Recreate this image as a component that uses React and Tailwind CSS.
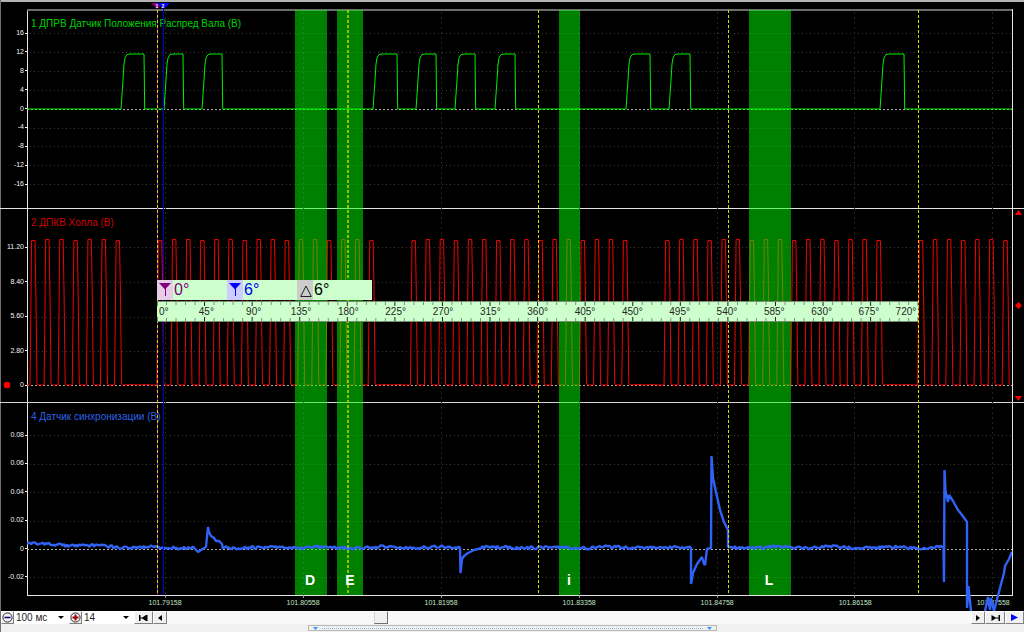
import React from 'react';

// Plot coordinates: x 27..1012, y 9..611
const PLOT_LEFT = 27;
const PLOT_RIGHT = 1012;

const channels = [
  {
    id: 1,
    title: '1 ДПРВ Датчик Положения Распред Вала (В)',
    ticks: ['16', '12', '8', '4', '0', '-4', '-8', '-12', '-16'],
    gridY: [33, 52, 71, 90, 128, 146, 165, 184],
    zeroY: 109,
  },
  {
    id: 2,
    title: '2 ДПКВ Холла (В)',
    ticks: ['11.20', '8.40', '5.60', '2.80', '0'],
    gridY: [247, 282, 317, 351],
    zeroY: 385,
  },
  {
    id: 4,
    title: '4 Датчик синхронизации (В)',
    ticks: ['0.08', '0.06', '0.04', '0.02', '0', '-0.02'],
    gridY: [435, 464, 492, 521, 577],
    zeroY: 549,
  },
];

const times = ['101.79158', '101.80558', '101.81958', '101.83358', '101.84758', '101.86158', '101.87558'];
const timeX = [165, 303, 441, 579, 717, 854, 992];

const bands = [
  { letter: 'D', x: 295, width: 32, textX: 310 },
  { letter: 'E', x: 337, width: 26, textX: 350 },
  { letter: 'i', x: 559, width: 21, textX: 569 },
  { letter: 'L', x: 749, width: 42, textX: 769 },
];

const cycleX = [157.5, 348, 538.5, 728.5, 918.5];
const angles = Array.from({ length: 17 }, (_, i) => `${i * 45}°`);

// Camshaft sensor: rise and fall of every pulse
const camPulses = [
  [121, 144],
  [164, 183],
  [202, 222],
  [373, 397],
  [416, 436],
  [455, 475],
  [495, 515],
  [626, 650],
  [669, 690],
  [880, 904],
];

const camPath =
  `M${PLOT_LEFT} 109` +
  camPulses
    .map(([a, b]) => `H${a}L${a + 2} 80L${a + 3} 64L${a + 4} 58L${a + 6} 54.5L${a + 9} 54H${b}L${b + 0.7} 109`)
    .join('') +
  `H${PLOT_RIGHT}`;

// Crank sensor: 18 slots per turn, the last two have no tooth
function buildCrankPath() {
  let d = `M${PLOT_LEFT} 385`;
  for (let k = -9; k < 61; k++) {
    const slot = (k + 36) % 18;
    const x = 156.8 + k * 14.09;
    if (slot > 15) {
      d += `L${x + 4} 384.5L${x + 8} 385`;
      continue;
    }
    const top = k % 3 === 0 ? 240.5 : 239.5;
    d += `L${x} 385L${x + 1} 300L${x + 1.6} ${top}H${x + 5}L${x + 6} 300L${x + 7} 384L${x + 8} 385`;
  }
  return d;
}

function noise(i) {
  const v = Math.sin(i * 12.9898) * 43758.5453;
  return v - Math.floor(v) - 0.5;
}

function flat(from, to, y1, y2) {
  let d = '';
  for (let x = from; x <= to; x += 1.5) {
    const y = y1 + ((y2 - y1) * (x - from)) / (to - from);
    d += `L${x} ${(y + noise(x) * 3 + Math.sin(x / 9) * 0.6).toFixed(1)}`;
  }
  return d;
}

const syncPath =
  'M27 544' +
  flat(28, 115, 543.5, 547) +
  flat(115, 193, 547.5, 547.5) +
  'L196 550L198 552L201 550L206 547L208 527L209 532L211 536L214 538L216 541L219 541L222 544L223 549' +
  flat(223, 459, 547.5, 547.5) +
  'L460 548L460.5 573L462 559L464 556L468 553L474 550L480 548.5' +
  flat(481, 690, 547.5, 547.5) +
  'L691 548L691 584L693 573L697 564L702 557L704 564L705 565L707 549L711 548L711.5 456L713 478L716 492L720 510L724 522L728 530L728 547' +
  flat(729, 943, 547.5, 547.5) +
  'L943.5 547L944 582L944.5 470L945.5 491L948 502L949 495L953 501L958 510L962 515L967 522L967 608L968.5 586L971 611';

const syncTail = 'M985 611L988 597L990 610L991 598L994 611L1000 588L1004 573L1005 566L1009 559L1012 552';

function PinIcon({ color }) {
  return (
    <svg className="w-4 h-4" viewBox="0 0 16 16" aria-hidden="true">
      <path d="M2 2H14L8 8.5Z" fill={color} />
      <path d="M8.5 7V15" stroke={color} />
    </svg>
  );
}

function Channel({ channel, className, axisClass, titleClass, children }) {
  return (
    <section className={`relative flex ${className}`}>
      <ul className={`w-[27px] shrink-0 flex flex-col justify-between ${axisClass}`}>
        {channel.ticks.map((t) => (
          <li key={t} className="flex items-center justify-end gap-px h-[10px] text-[7px] leading-[10px] text-slate-100">
            {t}
            <span className="w-[2px] h-px bg-white" />
          </li>
        ))}
      </ul>
      <div className="flex-1 border-x border-neutral-200">
        <h2 className={`pl-[3px] text-[10px] leading-4 whitespace-nowrap ${titleClass}`}>{channel.title}</h2>
      </div>
      <div className="w-[11px] shrink-0 flex flex-col items-center justify-between py-px">{children}</div>
    </section>
  );
}

function Traces() {
  return (
    <svg
      className="absolute inset-0 w-full h-full"
      viewBox="27 9 985 602"
      preserveAspectRatio="none"
      fill="none"
      role="img"
      aria-label="Осциллограмма"
    >
      {/* Grid */}
      {channels.map((c) => (
        <g key={c.id} shapeRendering="crispEdges">
          {c.gridY.map((y) => (
            <path key={y} d={`M30 ${y}.5H1012`} stroke="#383838" strokeDasharray="1 3" />
          ))}
          <path d={`M27 ${c.zeroY}.5H1012`} stroke="#b0b0b0" strokeDasharray="2 2" />
        </g>
      ))}
      {timeX.map((x) => (
        <path key={x} d={`M${x}.5 12V595`} stroke="#242424" strokeDasharray="2 3" shapeRendering="crispEdges" />
      ))}
      {timeX.map((x) => (
        <path key={x} d={`M${x}.5 595V598`} stroke="#a0a0a0" />
      ))}

      <path d={camPath} stroke="#00f000" />
      <path d={buildCrankPath()} stroke="#f00000" />

      {/* Phase bands */}
      {bands.map((b) => (
        <rect key={b.letter} x={b.x} y="10" width={b.width} height="585" fill="#00ff00" fillOpacity="0.5" />
      ))}

      <path d={syncPath} stroke="#2f62f5" strokeWidth="2.4" strokeLinejoin="bevel" />
      <path d={syncTail} stroke="#2f62f5" strokeWidth="2.4" strokeLinejoin="bevel" />

      {/* Cycle marks and rulers */}
      <path d="M157.5 10V595" stroke="#800080" shapeRendering="crispEdges" />
      {cycleX.map((x) => (
        <path
          key={x}
          d={`M${x} 10V595`}
          stroke="#d8d800"
          strokeWidth={x === 348 ? 2 : 1}
          strokeOpacity={x === 348 ? 0.7 : 1}
          strokeDasharray="3 2"
          shapeRendering="crispEdges"
        />
      ))}
      <path d="M163.5 9V595" stroke="#0000d8" shapeRendering="crispEdges" />

      {bands.map((b) => (
        <text key={b.letter} x={b.textX} y="585" textAnchor="middle" fill="#ffffff" className="text-[14px] font-bold">
          {b.letter}
        </text>
      ))}
    </svg>
  );
}

function AngleRuler() {
  const minor = Array.from({ length: 81 }, (_, i) => i);
  return (
    <div className="absolute left-[13.2%] top-[271px] w-[77.3%]">
      <div className="flex w-[215px] h-5 bg-[#ccffcc] text-base leading-5">
        <div className="flex gap-px w-[70px] text-[#800080]">
          <span className="w-4 pt-px bg-[#e6cce6]"><PinIcon color="#800080" /></span>0°
        </div>
        <div className="flex gap-px w-[70px] text-[#0000ff]">
          <span className="w-4 pt-px bg-[#ccccff]"><PinIcon color="#0000ff" /></span>6°
        </div>
        <div className="flex gap-px text-black">
          <span className="w-4 pt-px bg-[#cccccc]">
            <svg className="w-4 h-4" viewBox="0 0 16 16" fill="none" stroke="#202020" aria-hidden="true">
              <path d="M9 5L14.3 15.5H3.7Z" />
            </svg>
          </span>
          6°
        </div>
      </div>
      <div className="relative mt-px h-[21px] bg-[#ccffcc] border-y border-[#6f8f6f]">
        <svg className="absolute inset-0 w-full h-full" viewBox="0 0 761 19" preserveAspectRatio="none" aria-hidden="true">
          {minor.map((i) => {
            const x = i * 9.51;
            const len = i % 5 === 0 ? 4 : 3;
            return (
              <path
                key={i}
                d={`M${x} 0V${len}M${x} ${19 - len}V19`}
                stroke={i % 5 === 0 ? '#202020' : '#809080'}
              />
            );
          })}
        </svg>
        <ol className="relative flex justify-between text-[10px] leading-[19px] text-neutral-800">
          {angles.map((a) => (
            <li key={a} className="w-0 flex justify-center first:justify-start first:pl-[2px] last:justify-end last:pr-[2px] whitespace-nowrap">
              <span>{a}</span>
            </li>
          ))}
        </ol>
      </div>
    </div>
  );
}

function ToolButton({ label, className, children }) {
  return (
    <button
      type="button"
      aria-label={label}
      className={`h-[13px] shrink-0 flex items-center justify-center bg-[#f0f0f0] border border-t-white border-l-white border-r-[#808080] border-b-[#808080] ${className}`}
    >
      {children}
    </button>
  );
}

function Dropdown({ label, options, className }) {
  return (
    <div className={`relative shrink-0 ${className}`}>
      <select
        aria-label={label}
        className="block w-full h-[13px] pl-[2px] appearance-none bg-white text-[10px] leading-[13px] text-neutral-800"
      >
        {options.map((o) => (
          <option key={o}>{o}</option>
        ))}
      </select>
      <svg className="absolute right-[5px] top-[5px] w-[6px] h-[3px] pointer-events-none" viewBox="0 0 6 3" aria-hidden="true">
        <path d="M0 0H6L3 3Z" fill="#000000" />
      </svg>
    </div>
  );
}

function ZoomIcon({ color, plus }) {
  return (
    <svg className="w-[11px] h-[11px]" viewBox="0 0 11 11" fill="none" aria-hidden="true">
      <circle cx="5.5" cy="5.5" r="4.6" stroke="#303030" />
      <path d={plus ? 'M2.5 5.5H8.5M5.5 2.5V8.5' : 'M2.5 5.5H8.5'} stroke={color} strokeWidth={plus ? 2 : 1.5} />
    </svg>
  );
}

export default function App() {
  return (
    <div className="min-h-screen flex flex-col bg-[#f0f0f0] font-['Liberation_Sans',Arial,sans-serif]">
      <main className="relative bg-black border-l border-l-[#707070]">
        <div className="h-[9px] border-t-2 border-[#b4b4b4]" />
        <div className="-ml-px flex flex-col">
          <Channel
            channel={channels[0]}
            className="h-[200px] border-b border-neutral-200"
            axisClass="pt-[19px] pb-[19px]"
            titleClass="pt-[7px] text-[#00d000]"
          />
          <Channel
            channel={channels[1]}
            className="h-[194px] border-b border-neutral-300"
            axisClass="pt-[33px] pb-[12px]"
            titleClass="pt-[6px] text-[#d00000]"
          >
            <svg className="w-[7px] h-[5px]" viewBox="0 0 7 5" aria-hidden="true">
              <path d="M3.5 0L7 5H0Z" fill="#ff0000" />
            </svg>
            <svg className="w-[7px] h-[7px]" viewBox="0 0 7 7" aria-hidden="true">
              <path d="M3.5 0L7 3.5L3.5 7L0 3.5Z" fill="#ff0000" />
            </svg>
            <svg className="w-[7px] h-[5px]" viewBox="0 0 7 5" aria-hidden="true">
              <path d="M0 0H7L3.5 5Z" fill="#ff0000" />
            </svg>
            <svg className="absolute left-[3px] bottom-[13px] w-2 h-2" viewBox="0 0 8 8" aria-hidden="true">
              <circle cx="4" cy="4" r="3.3" fill="#ff0000" />
            </svg>
          </Channel>
          <Channel
            channel={channels[2]}
            className="h-[192px]"
            axisClass="pt-[27px] pb-[13px]"
            titleClass="pt-[6px] text-[#2f62e8]"
          />
        </div>

        {/* Time axis */}
        <div className="ml-[26px] mr-[11px] h-4 border-t border-neutral-200">
          <ol className="flex justify-between pl-[14%] pr-[2%] pt-[2px] text-[7px] leading-[10px] text-[#c4e4c4]">
            {times.map((t) => (
              <li key={t} className="w-0 flex justify-center whitespace-nowrap">
                <span>{t}</span>
              </li>
            ))}
          </ol>
        </div>

        <div className="absolute left-[26px] right-[12px] top-[9px] bottom-0">
          <div className="h-[2px] bg-[#6c6c6c]" />
          <Traces />
          <AngleRuler />
          {/* Ruler flags */}
          <svg className="absolute left-[12.5%] -top-[6px] w-5 h-[6px]" viewBox="0 0 20 6" aria-hidden="true">
            <path d="M1 0H13L7 6Z" fill="#800080" />
            <path d="M7 0H20L13.5 6Z" fill="#0000ff" />
            <text x="7" y="5" textAnchor="middle" fill="#ffffff" className="text-[5px] font-bold">1</text>
            <text x="13" y="5" textAnchor="middle" fill="#ffffff" className="text-[5px] font-bold">2</text>
          </svg>
        </div>
      </main>

      {/* Playback bar */}
      <div className="flex h-[13px] bg-[#f8f8f8] border-l border-[#707070]">
        <ToolButton label="Уменьшить" className="w-[13px]">
          <ZoomIcon color="#000080" />
        </ToolButton>
        <Dropdown label="Развёртка" options={['100 мс']} className="w-[55px]" />
        <ToolButton label="Увеличить" className="w-[13px]">
          <ZoomIcon color="#a00000" plus />
        </ToolButton>
        <Dropdown label="Масштаб" options={['14']} className="w-[52px]" />
        <ToolButton label="В начало" className="w-[19px]">
          <svg className="w-[9px] h-[6px]" viewBox="0 0 9 6" aria-hidden="true">
            <path d="M0 0H1.5V6H0ZM1 2.5H4V3.5H1ZM2.5 3L7 0V6ZM7 0H8.5V6H7Z" fill="#000000" />
          </svg>
        </ToolButton>
        <ToolButton label="Назад" className="w-[14px]">
          <svg className="w-[4px] h-[6px]" viewBox="0 0 4 6" aria-hidden="true">
            <path d="M0 3L4 0V6Z" fill="#000000" />
          </svg>
        </ToolButton>
        <input
          type="range"
          aria-label="Позиция"
          min="0"
          max="1000"
          defaultValue="262"
          className="flex-1 min-w-0 h-[13px] appearance-none bg-[#f8f8f8] [&::-webkit-slider-thumb]:appearance-none [&::-webkit-slider-thumb]:w-[14px] [&::-webkit-slider-thumb]:h-[13px] [&::-webkit-slider-thumb]:bg-[#f0f0f0] [&::-webkit-slider-thumb]:border [&::-webkit-slider-thumb]:border-solid [&::-webkit-slider-thumb]:border-t-white [&::-webkit-slider-thumb]:border-l-neutral-300 [&::-webkit-slider-thumb]:border-r-[#707070] [&::-webkit-slider-thumb]:border-b-[#707070]"
        />
        <ToolButton label="Вперёд" className="w-[14px]">
          <svg className="w-[4px] h-[6px]" viewBox="0 0 4 6" aria-hidden="true">
            <path d="M0 0L4 3L0 6Z" fill="#000000" />
          </svg>
        </ToolButton>
        <ToolButton label="В конец" className="w-[20px]">
          <svg className="w-[9px] h-[6px]" viewBox="0 0 9 6" aria-hidden="true">
            <path d="M0.5 0L5.5 3L0.5 6ZM5 2.5H8V3.5H5ZM7.5 0H9V6H7.5Z" fill="#000000" />
          </svg>
        </ToolButton>
        <ToolButton label="Пуск" className="w-[19px]">
          <svg className="w-[7px] h-[7px]" viewBox="0 0 7 7" aria-hidden="true">
            <path d="M0 0L7 3.5L0 7Z" fill="#0000ff" />
          </svg>
        </ToolButton>
      </div>

      {/* Splitter */}
      <div className="flex-1 pt-px border-l border-[#707070]">
        <div className="mx-auto w-2/5 h-[6px] flex items-center gap-1 px-1 border border-[#b8b8b8]">
          <svg className="w-[5px] h-[3px]" viewBox="0 0 5 3" aria-hidden="true">
            <path d="M0 0H5L2.5 3Z" fill="#3399ff" />
          </svg>
          <div className="flex-1 border-t border-dotted border-[#80b8f0]" />
          <svg className="w-[5px] h-[3px]" viewBox="0 0 5 3" aria-hidden="true">
            <path d="M0 0H5L2.5 3Z" fill="#3399ff" />
          </svg>
        </div>
      </div>
    </div>
  );
}
